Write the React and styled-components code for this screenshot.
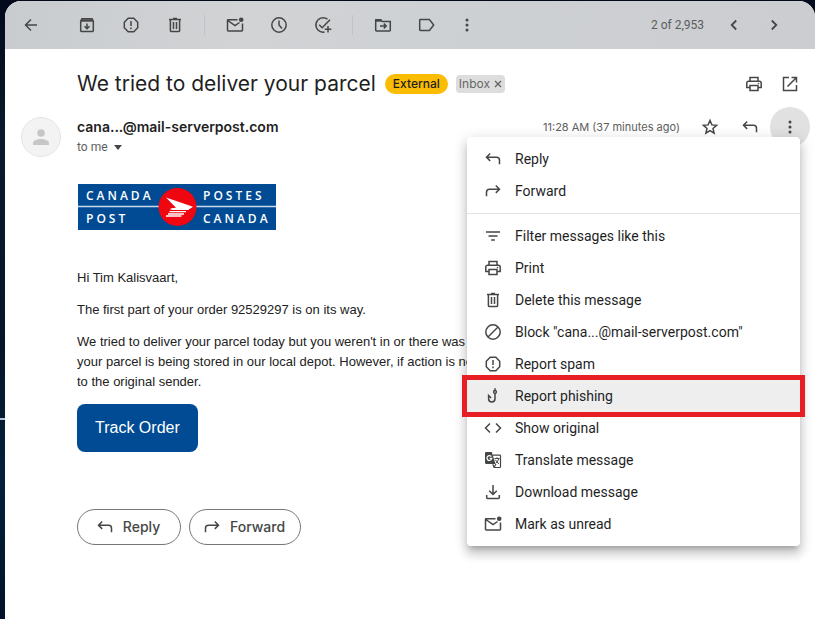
import React from "react";
import styled, { createGlobalStyle } from "styled-components";

const sans = `Roboto, "Liberation Sans", sans-serif`;
const display = `Inter, Roboto, sans-serif`;
const mailFont = `"Liberation Sans", Arial, sans-serif`;

const GlobalStyle = createGlobalStyle`
  * { box-sizing: border-box; }
  body { margin: 0; background: #06182c; font-family: ${sans}; color: #1f1f1f; }
  button { font: inherit; color: inherit; border: 0; padding: 0; background: none; cursor: pointer; }
  h1, p { margin: 0; font-weight: 400; }
`;

const Backdrop = styled.div`
  min-height: 100vh;
  display: flex;
  padding: 1px 0 0 5px;
  background:
    linear-gradient(#b9c4d4, #b9c4d4) 0 418px / 5px 2px no-repeat,
    linear-gradient(180deg, #020a1c 0, #0a1a2c 140px, #061528 340px, #04203c 480px, #021228 100%);
`;

const Panel = styled.main`
  flex: 1;
  min-width: 0;
  background: #fff;
  border-radius: 16px 16px 0 0;
`;

const Toolbar = styled.header`
  height: 48px;
  display: flex;
  align-items: center;
  padding: 0 21px 0 6px;
  border-radius: 16px 16px 0 0;
  background: linear-gradient(100deg, #c9cccf, #d1d3d5 30%, #cdd0d3 60%, #cccdd1);
  color: #444746;
`;

const ToolGroup = styled.div`
  display: flex;
  gap: ${(p) => p.$gap || 0}px;
  margin-left: ${(p) => p.$before || 0}px;
`;

const Divider = styled.span`
  width: 1px;
  height: 20px;
  margin: 0 10px 0 9px;
  background: #bfc2c6;
`;

const IconButton = styled.button`
  width: ${(p) => p.$width || 40}px;
  height: 40px;
  flex: none;
  display: grid;
  place-items: center;
  border-radius: 50%;
  color: #444746;
  background: ${(p) => (p.$active ? "#e1e1e1" : "none")};
`;

const Counter = styled.span`
  margin-left: auto;
  padding-right: 10px;
  font-size: 12px;
  line-height: 16px;
  color: #5a5d60;
`;

const SubjectRow = styled.div`
  display: flex;
  align-items: center;
  padding: 15px 7px 3px 72px;
`;

const Subject = styled.h1`
  font-family: ${display};
  font-size: 21px;
  line-height: 28px;
  margin-right: 9px;
`;

const ExternalChip = styled.span`
  height: 20px;
  padding: 0 8px;
  border-radius: 10px;
  background: #fbbc04;
  font: 500 12px/20px ${display};
`;

const InboxChip = styled.span`
  height: 18px;
  margin-left: 8px;
  padding: 0 3px;
  display: flex;
  align-items: center;
  gap: 4px;
  border-radius: 4px;
  background: #ddd;
  color: #666;
  font: 400 12px/18px ${display};
`;

const ChipRemove = styled.button`
  width: 8px;
  height: 18px;
  display: grid;
  place-items: center;
`;

const SubjectActions = styled.div`
  display: flex;
  margin-left: auto;
`;

const MessageHead = styled.div`
  display: flex;
  align-items: flex-start;
  padding: 0 5px 0 16px;
`;

const Avatar = styled.div`
  width: 40px;
  height: 40px;
  margin: 10px 16px 0 0;
  border: 1px solid #e4e4e4;
  border-radius: 50%;
  background: #f3f3f3;
  display: grid;
  place-items: center;
`;

const SenderBlock = styled.div`
  padding-top: 10px;
`;

const Sender = styled.div`
  font: 600 14px/20px ${display};
`;

const Recipient = styled.button`
  display: flex;
  align-items: center;
  gap: 5px;
  font-size: 12px;
  line-height: 20px;
  color: #5e5e5e;
`;

const MessageActions = styled.div`
  display: flex;
  align-items: center;
  margin-left: auto;
`;

const SentDate = styled.span`
  margin-right: 10px;
  font: 400 11px/16px ${display};
  color: #5e5e5e;
`;

const MenuAnchor = styled.div`
  position: relative;
`;

const Menu = styled.div`
  position: absolute;
  z-index: 2;
  top: 30px;
  right: 10px;
  width: 333px;
  padding: 6px 0;
  border-radius: 4px;
  background: #fff;
  box-shadow: 0 8px 10px 1px rgba(0, 0, 0, 0.14), 0 3px 14px 2px rgba(0, 0, 0, 0.12),
    0 5px 5px -3px rgba(0, 0, 0, 0.2);
`;

const MenuItem = styled.button`
  width: 100%;
  height: 32px;
  display: flex;
  align-items: center;
  gap: 12px;
  padding: 0 16px;
  font-size: 14px;
  line-height: 20px;
  text-align: left;
  white-space: nowrap;
  background: ${(p) => (p.$marked ? "#eee" : "none")};
  outline: ${(p) => (p.$marked ? "5px solid #e81e25" : "none")};

  svg { color: #444746; }
`;

const MenuRule = styled.hr`
  height: 1px;
  margin: 6px 0;
  border: 0;
  background: #e3e3e3;
`;

const Body = styled.article`
  padding: 27px 72px 0;
  font: 400 13px/20px ${mailFont};
  color: #222;
`;

const Logo = styled.svg`
  display: block;
  margin-bottom: 38px;
`;

const Paragraph = styled.p`
  margin-bottom: 12px;
  white-space: nowrap;
`;

const TrackLink = styled.a`
  display: inline-block;
  padding: 12px 18px;
  border-radius: 8px;
  background: #004b93;
  color: #fff;
  font-size: 16px;
  line-height: 24px;
  text-decoration: none;
`;

const Replies = styled.div`
  display: flex;
  gap: 8px;
  padding: 57px 72px 0;
`;

const ReplyButton = styled.button`
  min-width: 104px;
  height: 36px;
  display: flex;
  align-items: center;
  justify-content: center;
  gap: 8px;
  padding: 0 15px 0 12px;
  border: 1px solid #747775;
  border-radius: 18px;
  font: 500 14px/20px ${display};
  color: #444746;
`;

const shapes = {
  back: <path d="M16 10H4.5M10 4.5L4.5 10l5.500 5.500" />,
  archive: (
    <>
      <path d="M3.700 6.200v9.200c0 .7.500 1.100 1.100 1.100h10.400c.6 0 1.100-.4 1.100-1.100V6.200l-1.200-2.400H4.900z" />
      <path d="M4 5.500h12" strokeWidth="2.400" />
      <path d="M10 8.500v5M7.500 11.300l2.500 2.500 2.500-2.500" />
    </>
  ),
  spam: (
    <>
      <path d="M7.200 3.300h5.600l3.900 3.900v5.600l-3.900 3.900H7.200l-3.900-3.900V7.200z" />
      <path d="M10 6v5M10 12.500v1.700" />
    </>
  ),
  trash: (
    <>
      <path d="M4 4.500h12M8 3.500h4M5.400 4.500v11.300c0 .4.300.7.700.7h7.800c.4 0 .7-.3.7-.7V4.500" />
      <path d="M8.500 7v7M11.500 7v7" />
    </>
  ),
  unread: (
    <>
      <path d="M12.500 4.700H3.100c-.4 0-.6.3-.6.600v10c0 .4.300.7.700.7h13.600c.4 0 .7-.3.7-.7V8.500M2.800 5.500L10 10.500l4.500-3" />
      <circle cx="16.200" cy="4.700" r="2.300" fill="currentColor" stroke="none" />
    </>
  ),
  clock: (
    <>
      <circle cx="10" cy="10" r="7.200" />
      <path d="M10 5.500V10l3 3.400" />
    </>
  ),
  task: (
    <path d="M14.500 4.200A7.200 7.200 0 1 0 11.500 17M6.200 9.800l3 3L17 4.800M15 11v6.500M11.800 14.200h6.500" />
  ),
  move: (
    <>
      <path d="M2.700 15.200V4.800h5l1.600 1.700h8v8.700c0 .4-.3.700-.7.700H3.400c-.4 0-.7-.3-.7-.7z" />
      <path d="M3 5.700h5.500" strokeWidth="2" />
      <path d="M7 11h6M10.800 8.600L13.200 11l-2.400 2.400" />
    </>
  ),
  label: <path d="M2.700 5.200c0-.4.300-.7.700-.7h9l4.300 5.500-4.300 5.500h-9c-.4 0-.7-.3-.7-.7z" />,
  more: (
    <g fill="currentColor" stroke="none">
      <circle cx="10" cy="5" r="1.500" />
      <circle cx="10" cy="10" r="1.500" />
      <circle cx="10" cy="15" r="1.500" />
    </g>
  ),
  prev: <path d="M12.200 5.500L7.700 10l4.500 4.500" strokeWidth="1.800" />,
  next: <path d="M7.800 5.500l4.500 4.500-4.500 4.500" strokeWidth="1.800" />,
  print: (
    <>
      <path d="M6 7V3.500h8V7M6 13.500H2.800V9c0-1.100.8-1.800 1.800-1.800h10.800c1 0 1.800.7 1.800 1.800v4.500H14M6 11.500h8v5H6z" />
      <circle cx="14.500" cy="9.500" r=".8" fill="currentColor" stroke="none" />
    </>
  ),
  open: <path d="M9 3.500H3.500v13h13V11M11.500 3.500h5v5M16.300 3.700L7.500 12.500" />,
  star: <path d="M10 3.500l1.900 4.400 4.700.4-3.600 3.100 1.100 4.700L10 13.600l-4.100 2.500L7 11.400 3.400 8.300l4.700-.4z" />,
  reply: <path d="M7.200 4.500L3.500 8.200l3.700 3.700M3.500 8.200h10c1.700 0 3 1.300 3 3v4" />,
  forward: <path d="M12.800 4.500l3.700 3.700-3.700 3.700M16.500 8.200h-10c-1.700 0-3 1.300-3 3v4" />,
  filter: <path d="M3 6h14M5.500 10h9M8.200 14h3.600" />,
  block: (
    <>
      <circle cx="10" cy="10" r="7.200" />
      <path d="M15 5L5 15" />
    </>
  ),
  hook: (
    <>
      <path d="M12 7.500v5.200a3.200 3.200 0 0 1-6.400 0V9.500l2.500 2.500M12 2.300v2.200" />
      <circle cx="12" cy="6" r="1.400" />
    </>
  ),
  code: <path d="M7 5.500L2.500 10 7 14.500M13 5.500l4.500 4.500-4.500 4.500" />,
  translate: (
    <>
      <path d="M2 3.200C2 2.500 2.500 2 3.200 2h5.600l3.700 12H3.200c-.7 0-1.200-.5-1.200-1.200z" fill="currentColor" stroke="none" />
      <path d="M8.300 6.600a2.400 2.400 0 1 0 .5 1.700H6.700" stroke="#fff" strokeWidth="1.200" />
      <path d="M10 5.200h6.800c.4 0 .7.300.7.700v10.900c0 .4-.3.700-.7.700H11l-1.200-3.200M11 17.500l2-3.500" strokeWidth="1.200" />
      <path d="M11.500 8.500h5M14 7.300v1.200M15.800 8.700c-.5 2-1.800 3.500-3 4.500M12.300 9.700l3.500 4.300" strokeWidth="1" />
    </>
  ),
  download: <path d="M10 3v9.200M6.200 8.700l3.800 3.800 3.800-3.800M3.700 13v2.800c0 .4.300.7.700.7h11.200c.4 0 .7-.3.700-.7V13" />,
};

const Icon = ({ name }) => (
  <svg width="20" height="20" viewBox="0 0 20 20" fill="none" stroke="currentColor" strokeWidth="1.500" aria-hidden="true">
    {shapes[name]}
  </svg>
);

const Tool = ({ name, label, ...rest }) => (
  <IconButton type="button" aria-label={label} {...rest}>
    <Icon name={name} />
  </IconButton>
);

const menuTop = [
  ["reply", "Reply"],
  ["forward", "Forward"],
];

const menuRest = [
  ["filter", "Filter messages like this"],
  ["print", "Print"],
  ["trash", "Delete this message"],
  ["block", 'Block "cana...@mail-serverpost.com"'],
  ["spam", "Report spam"],
  ["hook", "Report phishing", true],
  ["code", "Show original"],
  ["translate", "Translate message"],
  ["download", "Download message"],
  ["unread", "Mark as unread"],
];

const MenuItems = ({ items }) =>
  items.map(([icon, label, marked]) => (
    <MenuItem key={label} type="button" role="menuitem" $marked={marked}>
      <Icon name={icon} />
      {label}
    </MenuItem>
  ));

const LogoWord = styled.text`
  font: 600 12px "Open Sans", sans-serif;
  letter-spacing: 3px;
  fill: #fff;
`;

const CanadaPostLogo = () => (
  <Logo width="200" height="46" viewBox="0 0 200 46" role="img" aria-label="Canada Post">
    <rect x="1" y="0" width="198" height="46" fill="#004b93" />
    <path d="M1 22.500h198" stroke="#c9daf0" strokeWidth="1.500" />
    <circle cx="100.500" cy="23" r="19" fill="#f00610" />
    <path d="M89 13.500l27 9.200-5 3.300H95.500l-1-1.800 4.500-.4z" fill="#fff" />
    <path d="M93.500 25.200h18M92.500 27.700h16.500M91 30h16M89 32h15.500" stroke="#fff" strokeWidth="1.300" />
    <LogoWord x="9" y="16">CANADA</LogoWord>
    <LogoWord x="9" y="39">POST</LogoWord>
    <LogoWord x="126" y="16">POSTES</LogoWord>
    <LogoWord x="126" y="39">CANADA</LogoWord>
  </Logo>
);

export default function App() {
  return (
    <>
      <GlobalStyle />
      <Backdrop>
        <Panel>
          <Toolbar>
            <Tool name="back" label="Back to inbox" />
            <ToolGroup $gap={4} $before={16}>
              <Tool name="archive" label="Archive" />
              <Tool name="spam" label="Report spam" />
              <Tool name="trash" label="Delete" />
            </ToolGroup>
            <Divider />
            <ToolGroup $gap={4}>
              <Tool name="unread" label="Mark as unread" />
              <Tool name="clock" label="Snooze" />
              <Tool name="task" label="Add to tasks" />
            </ToolGroup>
            <Divider />
            <ToolGroup $gap={4}>
              <Tool name="move" label="Move to" />
              <Tool name="label" label="Labels" />
            </ToolGroup>
            <Tool name="more" label="More" />
            <Counter>2 of 2,953</Counter>
            <Tool name="prev" label="Newer" />
            <Tool name="next" label="Older" />
          </Toolbar>

          <SubjectRow>
            <Subject>We tried to deliver your parcel</Subject>
            <ExternalChip>External</ExternalChip>
            <InboxChip>
              Inbox
              <ChipRemove type="button" aria-label="Remove label Inbox">
                <svg width="8" height="8" viewBox="0 0 8 8" stroke="currentColor" strokeWidth="1.400" aria-hidden="true">
                  <path d="M1 1l6 6M7 1L1 7" />
                </svg>
              </ChipRemove>
            </InboxChip>
            <SubjectActions>
              <Tool name="print" label="Print all" $width={36} />
              <Tool name="open" label="Open in new window" $width={36} />
            </SubjectActions>
          </SubjectRow>

          <MessageHead>
            <Avatar>
              <svg width="16" height="16" viewBox="0 0 16 16" fill="#c6c6c6" aria-hidden="true">
                <circle cx="8" cy="4" r="3.800" />
                <path d="M0 16v-2c0-2.700 5.300-4 8-4s8 1.300 8 4v2z" />
              </svg>
            </Avatar>
            <SenderBlock>
              <Sender>cana...@mail-serverpost.com</Sender>
              <Recipient type="button">
                to me
                <svg width="10" height="5" viewBox="0 0 10 5" fill="#444746" aria-hidden="true">
                  <path d="M1 0h8L5 5z" />
                </svg>
              </Recipient>
            </SenderBlock>
            <MessageActions>
              <SentDate>11:28 AM (37 minutes ago)</SentDate>
              <Tool name="star" label="Star" />
              <Tool name="reply" label="Reply" />
              <MenuAnchor>
                <Tool name="more" label="More options" $active />
                <Menu role="menu">
                  <MenuItems items={menuTop} />
                  <MenuRule />
                  <MenuItems items={menuRest} />
                </Menu>
              </MenuAnchor>
            </MessageActions>
          </MessageHead>

          <Body>
            <CanadaPostLogo />
            <Paragraph>Hi Tim Kalisvaart,</Paragraph>
            <Paragraph>The first part of your order 92529297 is on its way.</Paragraph>
            <Paragraph>
              We tried to deliver your parcel today but you weren't in or there was no
              <br />
              your parcel is being stored in our local depot. However, if action is not
              <br />
              to the original sender.
            </Paragraph>
            <TrackLink href="#track">Track Order</TrackLink>
          </Body>

          <Replies>
            <ReplyButton type="button">
              <Icon name="reply" />
              Reply
            </ReplyButton>
            <ReplyButton type="button">
              <Icon name="forward" />
              Forward
            </ReplyButton>
          </Replies>
        </Panel>
      </Backdrop>
    </>
  );
}
